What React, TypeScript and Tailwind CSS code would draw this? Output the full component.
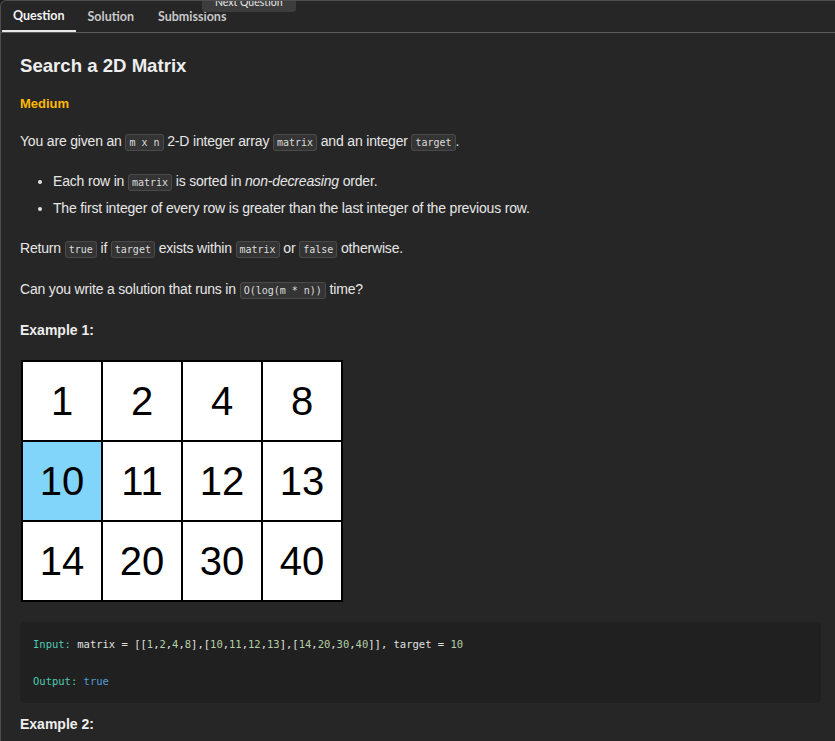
import React from "react";

const C = ({ children }: { children: React.ReactNode }) => (
  <code className="rounded-[3px] border border-[#4a4a4a] bg-[#343434] px-[3px] py-[2px] font-['DejaVu_Sans_Mono',monospace] text-[10px] leading-none tracking-normal text-[#dedede]">
    {children}
  </code>
);

const rows = [
  [1, 2, 4, 8],
  [10, 11, 12, 13],
  [14, 20, 30, 40],
];

export default function App() {
  return (
    <div className="h-[741px] w-[835px] overflow-hidden bg-[#1a1a1a]">
      <div className="relative h-full w-full overflow-hidden rounded-tl-[6px] border-l border-t border-[#4e4e4e] bg-[#262626] font-['Liberation_Sans',Arial,sans-serif] text-[#e6e6e6]">
        {/* tabs */}
        <div className="relative flex h-[32px] items-stretch border-b border-[#5c5c5c] pl-[1px] font-['Lato',sans-serif] text-[12.5px] font-bold">
          <div className="flex items-center border-b-2 border-[#e8e8e8] px-[11px] pt-[2px] text-[#f2f2f2]">Question</div>
          <div className="flex items-center px-[12px] pt-[2px] text-[#c8c8c8]">Solution</div>
          <div className="flex items-center px-[12px] pt-[2px] text-[#c8c8c8]">Submissions</div>
          <div className="absolute left-[201px] top-[-8px] rounded-b-[3px] bg-[#3d3d3d] px-[13px] pb-[3px] pt-[2px] font-['Lato',sans-serif] text-[10.5px] font-normal leading-[14px] text-[#e6e6e6]">
            Next Question
          </div>
        </div>

        <div className="px-[19px]">
          <h1 className="mt-[22px] text-[18.6px] font-bold leading-[22px] text-[#eeeeee]">Search a 2D Matrix</h1>
          <div className="mt-[19px] text-[13px] font-bold leading-[16px] text-[#ffb800]">Medium</div>
          <div className="tracking-[-0.18px]">
            <p className="mt-[19px] text-[14px] leading-[20px]">
              You are given an <C>m x n</C> 2-D integer array <C>matrix</C> and an integer <C>target</C>.
            </p>
            <ul className="mt-[20px] list-disc pl-[33px] text-[14px] leading-[20px]">
              <li>
                Each row in <C>matrix</C> is sorted in <em>non-decreasing</em> order.
              </li>
              <li className="mt-[7px]">The first integer of every row is greater than the last integer of the previous row.</li>
            </ul>
            <p className="mt-[20px] text-[14px] leading-[20px]">
              Return <C>true</C> if <C>target</C> exists within <C>matrix</C> or <C>false</C> otherwise.
            </p>
            <p className="mt-[21px] text-[14px] leading-[20px]">
              Can you write a solution that runs in <C>O(log(m * n))</C> time?
            </p>
          </div>
          <div className="mt-[21px] text-[14px] font-bold leading-[20px] text-[#eeeeee]">Example 1:</div>

          <div className="ml-[1px] mt-[20px] grid w-fit grid-cols-[repeat(4,78px)] grid-rows-[repeat(3,78px)] gap-[2px] bg-black p-[2px]">
            {rows.flat().map((n) => (
              <div
                key={n}
                className={`flex items-center justify-center font-['Liberation_Sans',Arial,sans-serif] text-[40px] text-black ${n === 10 ? "bg-[#81d4fa]" : "bg-white"}`}
              >
                {n}
              </div>
            ))}
          </div>

          <div className="mt-[20px] w-[801px] rounded-[5px] bg-[#202020] px-[13px] pb-[14px] pt-[14px] font-['DejaVu_Sans_Mono',monospace] text-[10.5px] leading-[16px] text-[#e0e0e0]">
            <div>
              <span className="text-[#4ec9b0]">Input:</span> matrix = [[<span className="text-[#b5cea8]">1</span>,<span className="text-[#b5cea8]">2</span>,<span className="text-[#b5cea8]">4</span>,<span className="text-[#b5cea8]">8</span>],[<span className="text-[#b5cea8]">10</span>,<span className="text-[#b5cea8]">11</span>,<span className="text-[#b5cea8]">12</span>,<span className="text-[#b5cea8]">13</span>],[<span className="text-[#b5cea8]">14</span>,<span className="text-[#b5cea8]">20</span>,<span className="text-[#b5cea8]">30</span>,<span className="text-[#b5cea8]">40</span>]], target = <span className="text-[#b5cea8]">10</span>
            </div>
            <div className="mt-[21px]">
              <span className="text-[#4ec9b0]">Output:</span> <span className="text-[#569cd6]">true</span>
            </div>
          </div>

          <div className="mt-[11px] text-[14px] font-bold leading-[20px] text-[#eeeeee]">Example 2:</div>
        </div>
      </div>
    </div>
  );
}
